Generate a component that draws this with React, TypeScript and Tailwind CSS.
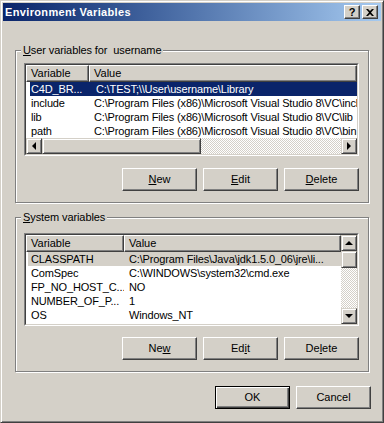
import React from 'react';

const raised =
  'border border-t-white border-l-white border-r-[#404040] border-b-[#404040] shadow-[inset_-1px_-1px_0_#808080]';

const scrollBtn =
  'w-[16px] h-[16px] shrink-0 flex items-center justify-center bg-[#d4d0c8] border border-t-[#d4d0c8] border-l-[#d4d0c8] border-r-[#404040] border-b-[#404040] shadow-[inset_1px_1px_0_#fff,inset_-1px_-1px_0_#808080]';

const track =
  'bg-[repeating-conic-gradient(#ffffff_0%_25%,#d4d0c8_0%_50%)] bg-[length:2px_2px]';

type Row = { name: string; value: string };

const userRows: Row[] = [
  { name: 'C4D_BR...', value: 'C:\\TEST;\\\\User\\username\\Library' },
  { name: 'include', value: 'C:\\Program Files (x86)\\Microsoft Visual Studio 8\\VC\\include' },
  { name: 'lib', value: 'C:\\Program Files (x86)\\Microsoft Visual Studio 8\\VC\\lib' },
  { name: 'path', value: 'C:\\Program Files (x86)\\Microsoft Visual Studio 8\\VC\\bin' },
];

const systemRows: Row[] = [
  { name: 'CLASSPATH', value: 'C:\\Program Files\\Java\\jdk1.5.0_06\\jre\\li...' },
  { name: 'ComSpec', value: 'C:\\WINDOWS\\system32\\cmd.exe' },
  { name: 'FP_NO_HOST_C...', value: 'NO' },
  { name: 'NUMBER_OF_P...', value: '1' },
  { name: 'OS', value: 'Windows_NT' },
  { name: 'Path', value: 'C:\\WINDOWS\\system32;C:\\WINDOWS;C:\\WINDOWS\\System32\\Wbem' },
];

const Arrow = ({ dir }: { dir: 'left' | 'right' | 'up' | 'down' }) => {
  const pts = {
    left: '5,0 5,8 1,4',
    right: '1,0 1,8 5,4',
    up: '0,5 8,5 4,1',
    down: '0,1 8,1 4,5',
  }[dir];
  const horiz = dir === 'left' || dir === 'right';
  return (
    <svg width={horiz ? 6 : 8} height={horiz ? 8 : 6} viewBox={horiz ? '0 0 6 8' : '0 0 8 6'}>
      <polygon points={pts} fill="#000" />
    </svg>
  );
};

const Btn = ({ children, def }: { children: React.ReactNode; def?: boolean }) => (
  <button
    className={`w-[75px] h-[23px] bg-[#d4d0c8] text-black text-[11px] leading-none ${
      def
        ? 'border border-black shadow-[inset_1px_1px_0_#fff,inset_-1px_-1px_0_#404040,inset_-2px_-2px_0_#808080]'
        : raised
    }`}
  >
    {children}
  </button>
);

const HeaderCell = ({ children, w }: { children: React.ReactNode; w?: string }) => (
  <div
    className={`h-[17px] shrink-0 bg-[#d4d0c8] pl-[4px] flex items-center ${raised} ${w ?? 'flex-1'}`}
  >
    {children}
  </div>
);

const ListRow = ({
  row,
  col,
  state,
}: {
  row: Row;
  col: string;
  state?: 'active' | 'inactive';
}) => (
  <div
    className={`h-[14px] flex items-center whitespace-nowrap tracking-[-0.15px] ${
      state === 'active'
        ? 'bg-[#0a246a] text-white ml-[4px]'
        : state === 'inactive'
        ? 'bg-[#d4d0c8] text-black ml-[2px]'
        : 'text-black ml-[2px]'
    }`}
  >
    <div className={`${col} shrink-0 overflow-hidden ${state === 'active' ? 'pl-[1px]' : 'pl-[3px]'}`}>
      {row.name}
    </div>
    <div className="pl-[5px]">{row.value}</div>
  </div>
);

const Sunken = ({ children }: { children: React.ReactNode }) => (
  <div className="w-[335px] h-[93px] border border-t-[#808080] border-l-[#808080] border-r-white border-b-white">
    <div className="w-full h-full border border-t-[#404040] border-l-[#404040] border-r-[#d4d0c8] border-b-[#d4d0c8] bg-white overflow-hidden">
      {children}
    </div>
  </div>
);

const Group = ({
  label,
  children,
  pt,
  className,
}: {
  label: React.ReactNode;
  children: React.ReactNode;
  pt: string;
  className?: string;
}) => (
  <div
    className={`relative ml-[12px] w-[354px] border border-[#808080] shadow-[inset_1px_1px_0_#fff,1px_1px_0_#fff] pl-[8px] pr-[9px] ${pt} pb-[11px] ${className ?? ''}`}
  >
    <span className="absolute -top-[8px] left-[5px] bg-[#d4d0c8] px-[2px] leading-[14px] whitespace-pre tracking-[-0.1px]">
      {label}
    </span>
    {children}
  </div>
);

export default function App() {
  return (
    <div className="w-[384px] h-[423px] bg-[#d4d0c8] border border-t-[#d4d0c8] border-l-[#d4d0c8] border-r-[#404040] border-b-[#404040] shadow-[inset_1px_1px_0_#fff,inset_-1px_-1px_0_#808080] p-[2px] text-[11px] text-black font-['Liberation_Sans',Arial,sans-serif] select-none">
      {/* title bar */}
      <div className="h-[18px] flex items-center justify-between bg-gradient-to-r from-[#0a246a] to-[#a6caf0] pl-[2px] pr-[3px]">
        <span className="text-white font-bold text-[11px] leading-none tracking-[0.35px]">Environment Variables</span>
        <div className="flex gap-[2px]">
          <div className={`w-[16px] h-[14px] bg-[#d4d0c8] flex items-center justify-center font-bold text-[11px] leading-none ${raised}`}>
            ?
          </div>
          <div className={`w-[16px] h-[14px] bg-[#d4d0c8] flex items-center justify-center ${raised}`}>
            <svg width="8" height="7" viewBox="0 0 8 7">
              <path d="M0 0h2l2 2 2-2h2L5 3.5 8 7H6L4 5 2 7H0l3-3.5z" fill="#000" />
            </svg>
          </div>
        </div>
      </div>

      <Group
        className="mt-[29px]"
        pt="pt-[12px]"
        label={
          <>
            <u>U</u>ser variables for  username
          </>
        }
      >
        <Sunken>
          <div className="flex">
            <HeaderCell w="w-[63px]">Variable</HeaderCell>
            <HeaderCell>Value</HeaderCell>
          </div>
          <div className="h-[56px]">
            {userRows.map((r, i) => (
              <ListRow key={r.name} row={r} col="w-[61px]" state={i === 0 ? 'active' : undefined} />
            ))}
          </div>
          <div className="flex h-[16px]">
            <div className={scrollBtn}>
              <Arrow dir="left" />
            </div>
            <div className={`flex-1 flex ${track}`}>
              <div className="w-[159px] h-full bg-[#d4d0c8] border border-t-[#d4d0c8] border-l-[#d4d0c8] border-r-[#404040] border-b-[#404040] shadow-[inset_1px_1px_0_#fff,inset_-1px_-1px_0_#808080]" />
            </div>
            <div className={scrollBtn}>
              <Arrow dir="right" />
            </div>
          </div>
        </Sunken>
        <div className="mt-[12px] flex justify-end gap-[6px]">
          <Btn>
            <u>N</u>ew
          </Btn>
          <Btn>
            <u>E</u>dit
          </Btn>
          <Btn>
            <u>D</u>elete
          </Btn>
        </div>
      </Group>

      <Group
        className="mt-[14px]"
        pt="pt-[15px]"
        label={
          <>
            <u>S</u>ystem variables
          </>
        }
      >
        <Sunken>
          <div className="flex h-full">
            <div className="flex-1 overflow-hidden">
              <div className="flex">
                <HeaderCell w="w-[98px]">Variable</HeaderCell>
                <HeaderCell>Value</HeaderCell>
              </div>
              {systemRows.map((r, i) => (
                <ListRow key={r.name} row={r} col="w-[96px]" state={i === 0 ? 'inactive' : undefined} />
              ))}
            </div>
            <div className={`w-[16px] flex flex-col ${track}`}>
              <div className={scrollBtn}>
                <Arrow dir="up" />
              </div>
              <div className="w-[16px] h-[17px] bg-[#d4d0c8] border border-t-[#d4d0c8] border-l-[#d4d0c8] border-r-[#404040] border-b-[#404040] shadow-[inset_1px_1px_0_#fff,inset_-1px_-1px_0_#808080]" />
              <div className="flex-1" />
              <div className={scrollBtn}>
                <Arrow dir="down" />
              </div>
            </div>
          </div>
        </Sunken>
        <div className="mt-[11px] flex justify-end gap-[6px]">
          <Btn>
            Ne<u>w</u>
          </Btn>
          <Btn>
            Ed<u>i</u>t
          </Btn>
          <Btn>
            De<u>l</u>ete
          </Btn>
        </div>
      </Group>

      <div className="mt-[14px] flex justify-end gap-[6px] pr-[10px]">
        <Btn def>OK</Btn>
        <Btn>Cancel</Btn>
      </div>
    </div>
  );
}
